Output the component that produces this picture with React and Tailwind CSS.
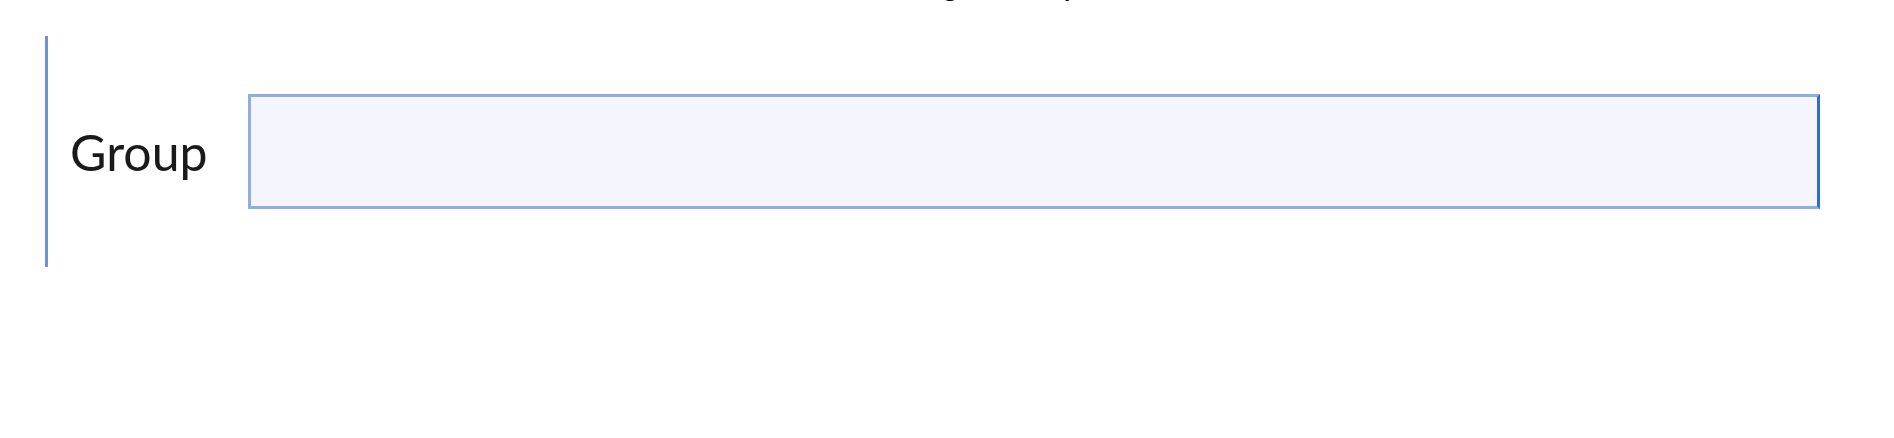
import React from 'react';

const ClippedTopLine = () => (
  <div className="h-[12px] overflow-hidden">
    <p
      className="-mt-[35px] pl-[940px] whitespace-pre text-[34px] leading-[40px] text-black"
      style={{ fontFamily: '"Liberation Mono", monospace' }}
    >
      {'g     p                        ,              _'}
    </p>
  </div>
);

export default function App() {
  return (
    <div className="w-full h-[438px] bg-white overflow-hidden">
      <ClippedTopLine />
      <div className="ml-[45px] mt-[24px] h-[231px] border-l-[3px] border-[#6f93d0] flex items-center pl-[22px]">
        <label
          className="w-[178px] shrink-0 text-[50px] leading-none text-[#1a1a1a]"
          style={{ fontFamily: 'Lato, sans-serif' }}
        >
          Group
        </label>
        <input
          type="text"
          className="w-[1572px] h-[115px] bg-[#f4f5fd] border-[3px] border-[#8fadde] border-r-[#2b72c6] outline-none"
        />
      </div>
    </div>
  );
}
